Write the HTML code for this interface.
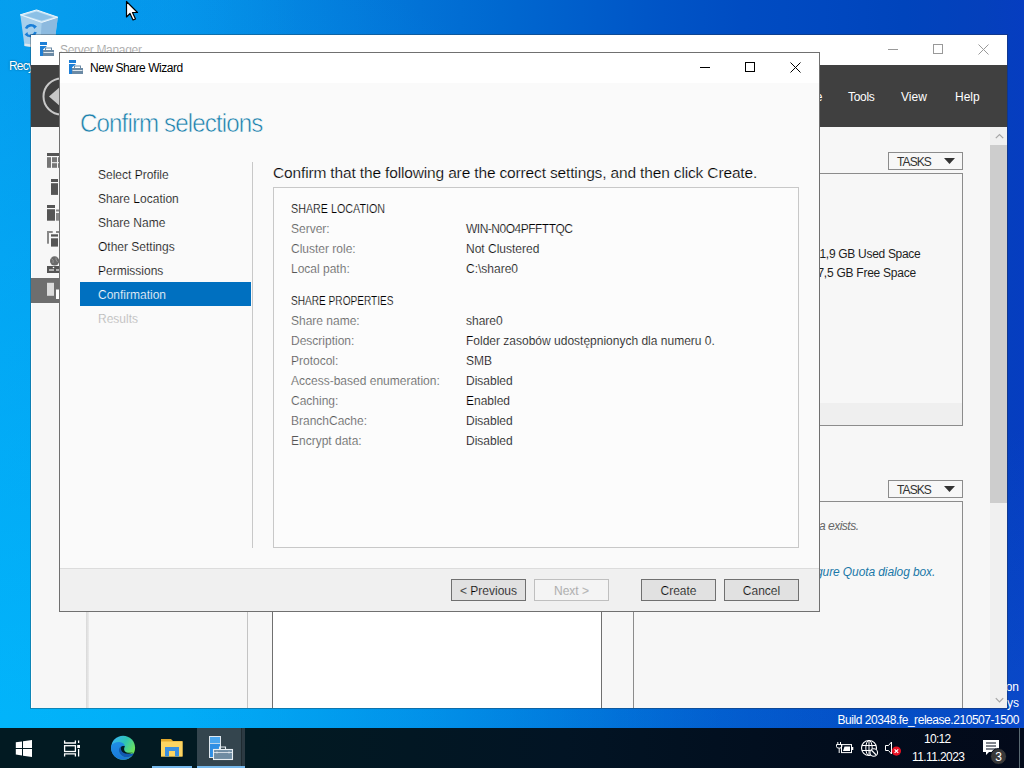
<!DOCTYPE html>
<html><head><meta charset="utf-8">
<style>
*{margin:0;padding:0;box-sizing:border-box}
html,body{width:1024px;height:768px;overflow:hidden}
body{position:relative;font-family:"Liberation Sans",sans-serif;font-size:12px;background:#0a78dc;color:#000}
.a{position:absolute}
.t{position:absolute;white-space:nowrap;line-height:1}
#desk{left:0;top:0;width:1024px;height:728px;background:linear-gradient(90deg,rgba(0,180,255,0.25) 0px,rgba(0,180,255,0) 300px),radial-gradient(ellipse 880px 820px at 0% 100%,rgba(0,190,255,0.75) 0%,rgba(0,175,250,0.52) 48%,rgba(0,150,240,0.2) 80%,rgba(0,140,240,0) 100%),radial-gradient(ellipse 700px 300px at 100% 100%,rgba(20,110,230,0.25) 0%,rgba(20,110,230,0) 100%),linear-gradient(90deg,#0898e8 0%,#0592e8 17.6%,#0488e2 25.5%,#037ddc 33.3%,#0272d6 41.1%,#0068d0 49%,#005ecb 56.8%,#0054c6 64.7%,#004cc2 72.6%,#0048c0 80.4%,#0044bc 88.3%,#0440bc 96%,#063dc0 100%)}
#taskbar{left:0;top:728px;width:1024px;height:40px;background:linear-gradient(90deg,#021a22 0%,#021a22 25%,#021424 55%,#020c1c 85%,#030a1a 100%)}
#sm{left:30px;top:34px;width:978px;height:675px;background:#f7f7f7;border:1px solid rgba(40,40,40,0.32);background-clip:padding-box;overflow:hidden}
#dlg{left:59px;top:52px;width:761px;height:560px;background:#fafafa;border:1px solid #707070;-webkit-text-stroke:0.2px #fafafa}
.lbl{color:#555}
.btn{position:absolute;height:22px;width:75px;background:#e1e1e1;border:1px solid #707070;text-align:center;line-height:21px;padding-top:1px;color:#000;-webkit-text-stroke:0.2px #e1e1e1}
</style></head><body>
<div id="desk" class="a"></div>
<!-- desktop items -->
<svg class="a" style="left:18px;top:8px" width="42" height="42" viewBox="0 0 42 42">
  <path d="M2.3 6.8L18.5 1.9L39.8 9.2L36 38L22 40L6.5 38Z" fill="#a6cfec"/>
  <path d="M23.7 14.4L39.8 9.2L36 38L22 40Z" fill="#8dbadf"/>
  <path d="M2.3 6.8L18.5 1.9L39.8 9.2L23.7 14.4Z" fill="#c4e2f6" stroke="#eaf5fc" stroke-width="1"/>
  <path d="M6 7.2L18.5 3.6L35.5 9.2L23.7 12.8Z" fill="#8cc0e6"/>
  <path d="M8 20.5a5.5 5.5 0 0 1 9 -1.5M17.5 24a5.5 5.5 0 0 1 -9.5 2" fill="none" stroke="#1a7fd8" stroke-width="2.6"/>
  <path d="M15.5 16.5L19 18.5L16 21Z M10 28.5L6.5 26.5L9.5 24Z" fill="#1a7fd8"/>
  <path d="M6.5 35.5L22 37.5V40L6.5 38Z" fill="#dce8ef"/>
</svg>
<div class="t" style="left:9px;top:60px;color:#fff;letter-spacing:-0.8px;text-shadow:0 0 2px rgba(0,0,0,.5)">Recycle Bin</div>

<div class="t" style="right:5px;top:681px;color:#fff">Windows Server 2022 Datacenter Evaluation</div>
<div class="t" style="right:5px;top:697px;color:#fff">Windows License valid for 180 days</div>
<div class="t" style="right:5px;top:714px;color:#fff;letter-spacing:-0.45px">Build 20348.fe_release.210507-1500</div>

<!-- Server Manager window -->
<div id="sm" class="a">
  <div class="a" style="left:0;top:0;width:976px;height:30px;background:#fff"></div>
  <svg class="a" style="left:9px;top:7px" width="16" height="16" viewBox="0 0 16 16">
    <rect x="0" y="0" width="7" height="3" fill="#1e7fd6"/>
    <rect x="0" y="4" width="3" height="10" fill="#1e7fd6"/>
    <path d="M3 4H7L3 7.5Z" fill="#1e7fd6"/>
    <rect x="5.5" y="6" width="6" height="2.5" fill="#fff" stroke="#6b8aa5" stroke-width="1"/>
    <rect x="3" y="8" width="11" height="6" fill="#6b8aa5"/>
    <rect x="3.5" y="10" width="10" height="1" fill="#e0e8ee"/>
  </svg>
  <div class="t" style="left:29px;top:9px;color:#9a9a9a;letter-spacing:-0.32px;-webkit-text-stroke:0.2px #fff">Server Manager</div>
  <div class="a" style="left:857px;top:14px;width:10px;height:1px;background:#999"></div>
  <div class="a" style="left:902px;top:9px;width:10px;height:10px;border:1px solid #999"></div>
  <svg class="a" style="left:947px;top:9px" width="11" height="11" viewBox="0 0 11 11"><path d="M0.5 0.5L10.5 10.5M10.5 0.5L0.5 10.5" stroke="#999" stroke-width="1"/></svg>
  <!-- dark header -->
  <div class="a" style="left:0;top:30px;width:976px;height:62px;background:#404040"></div>
  <svg class="a" style="left:11px;top:42px" width="40" height="40" viewBox="0 0 40 40">
    <circle cx="19.5" cy="19.5" r="18" fill="none" stroke="#c8c8c8" stroke-width="2"/>
    <path d="M7 19.5L19 9V30Z" fill="#c8c8c8"/>
    <rect x="18" y="16" width="12" height="7" fill="#c8c8c8"/>
  </svg>
  <div class="t" style="left:748px;top:56px;color:#fff">Manage</div>
  <div class="t" style="left:817px;top:56px;color:#fff;letter-spacing:-0.3px">Tools</div>
  <div class="t" style="left:870px;top:56px;color:#fff">View</div>
  <div class="t" style="left:924px;top:56px;color:#fff">Help</div>
  <!-- content -->
  <div class="a" style="left:0;top:92px;width:56px;height:582px;background:#f7f7f7"></div>
  <div class="a" style="left:0;top:92px;width:1px;height:582px;background:#fff"></div>
  <div class="a" style="left:55px;top:92px;width:3px;height:582px;background:linear-gradient(90deg,#d8d8d8,#ececec)"></div>
  <div class="a" style="left:0;top:243px;width:55px;height:25px;background:#6e6e6e"></div>
  <div class="a" style="left:216px;top:92px;width:1px;height:582px;background:#c4c4c4"></div>
  <div class="a" style="left:241px;top:92px;width:1px;height:582px;background:#707070"></div>
  <div class="a" style="left:242px;top:92px;width:328px;height:582px;background:#fff"></div>
  <div class="a" style="left:570px;top:92px;width:1px;height:582px;background:#707070"></div>
  <!-- nav icons -->
  <svg class="a" style="left:16px;top:118px" width="14" height="150" viewBox="0 0 14 150">
    <rect x="0" y="0" width="14" height="3" fill="#555"/>
    <rect x="0" y="4.2" width="4" height="10.6" fill="#767676"/>
    <rect x="5" y="4.2" width="5" height="5" fill="#767676"/>
    <rect x="5" y="10.2" width="5" height="4.6" fill="#767676"/>
    <rect x="11" y="4.2" width="3" height="5" fill="#767676"/>
    <rect x="11" y="10.2" width="3" height="4.6" fill="#767676"/>
    <rect x="4" y="26" width="7" height="3" fill="#555"/>
    <rect x="4" y="30.2" width="7" height="11.7" fill="#555"/>
    <rect x="0" y="52" width="8" height="3" fill="#555"/>
    <rect x="0" y="56.2" width="8" height="11.5" fill="#555"/>
    <rect x="9" y="56.5" width="5" height="2" fill="#888"/>
    <rect x="9" y="60" width="5" height="7.7" fill="#888"/>
    <rect x="0" y="78" width="5.7" height="2" fill="#888"/>
    <rect x="0" y="80" width="2" height="10.7" fill="#888"/>
    <rect x="9" y="78" width="5" height="2" fill="#888"/>
    <rect x="3.5" y="80.8" width="8" height="13.3" fill="#f7f7f7"/>
    <rect x="4" y="81.3" width="7" height="2.3" fill="#555"/>
    <rect x="4" y="85.3" width="7" height="8.3" fill="#555"/>
    <circle cx="7.6" cy="107.9" r="4.6" fill="#6a6a6a"/>
    <path d="M4.5 105.5Q7 107 6 110M9 104.5Q8.5 107 10.5 109" stroke="#9a9a9a" stroke-width="0.9" fill="none"/>
    <rect x="0" y="113" width="14" height="7" fill="#555"/>
    <rect x="2" y="116" width="5" height="2" fill="#b0b0b0"/>
    <rect x="9" y="116" width="5" height="2" fill="#b0b0b0"/>
    <circle cx="6.5" cy="114.5" r="0.8" fill="#fff"/>
    <rect x="0" y="129.8" width="7" height="13" fill="#dcdcdc"/>
    <rect x="9" y="136.5" width="5" height="9.5" fill="#fff"/>
  </svg>
  <!-- scrollbar -->
  <div class="a" style="left:959px;top:92px;width:17px;height:582px;background:#f0f0f0"></div>
  <div class="a" style="left:959px;top:110px;width:17px;height:358px;background:#cdcdcd"></div>
  <svg class="a" style="left:964px;top:98px" width="9" height="7" viewBox="0 0 9 7"><path d="M0.8 5.2L4.5 1.5L8.2 5.2" fill="none" stroke="#a6a6a6" stroke-width="1.2"/></svg>
  <svg class="a" style="left:964px;top:662px" width="9" height="7" viewBox="0 0 9 7"><path d="M0.8 1.2L4.5 4.9L8.2 1.2" fill="none" stroke="#a6a6a6" stroke-width="1.2"/></svg>
  <!-- panel 1 -->
  <div class="a" style="left:857px;top:117px;width:75px;height:18px;border:1px solid #8c8c8c;background:#f7f7f7"></div>
  <div class="t" style="left:866px;top:121px;color:#333;letter-spacing:-0.9px">TASKS</div>
  <svg class="a" style="left:913px;top:123px" width="11" height="7" viewBox="0 0 11 7"><path d="M0 0H11L5.5 6Z" fill="#333"/></svg>
  <div class="a" style="left:602px;top:138px;width:330px;height:253px;border:1px solid #8c8c8c;background:#f7f7f7"></div>
  <div class="a" style="left:603px;top:368px;width:328px;height:22px;background:#efefef"></div>
  <div class="t" style="left:783px;top:213px;color:#1e1e1e;letter-spacing:-0.3px">11,9 GB Used Space</div>
  <div class="t" style="left:780px;top:232px;color:#1e1e1e;letter-spacing:-0.25px">87,5 GB Free Space</div>
  <!-- panel 2 -->
  <div class="a" style="left:857px;top:445px;width:75px;height:18px;border:1px solid #8c8c8c;background:#f7f7f7"></div>
  <div class="t" style="left:866px;top:449px;color:#333;letter-spacing:-0.9px">TASKS</div>
  <svg class="a" style="left:913px;top:451px" width="11" height="7" viewBox="0 0 11 7"><path d="M0 0H11L5.5 6Z" fill="#333"/></svg>
  <div class="a" style="left:602px;top:466px;width:330px;height:220px;border:1px solid #8c8c8c;background:#f7f7f7"></div>
  <div class="t" style="left:788px;top:485px;color:#666;font-style:italic;letter-spacing:-0.5px">a exists.</div>
  <div class="t" style="left:785px;top:531px;color:#1a78a8;font-style:italic;letter-spacing:-0.1px">gure Quota dialog box.</div>
</div>

<!-- Dialog -->
<div id="dlg" class="a">
  <div class="a" style="left:0;top:0;width:759px;height:30px;background:#fff"></div>
  <svg class="a" style="left:9px;top:7px" width="16" height="16" viewBox="0 0 16 16">
    <rect x="0" y="0" width="7" height="3" fill="#1e7fd6"/>
    <rect x="0" y="4" width="3" height="10" fill="#1e7fd6"/>
    <path d="M3 4H7L3 7.5Z" fill="#1e7fd6"/>
    <rect x="5.5" y="6" width="6" height="2.5" fill="#fff" stroke="#6b8aa5" stroke-width="1"/>
    <rect x="3" y="8" width="11" height="6" fill="#6b8aa5"/>
    <rect x="3.5" y="10" width="10" height="1" fill="#e0e8ee"/>
  </svg>
  <div class="t" style="left:30px;top:9px;color:#000;letter-spacing:-0.45px;-webkit-text-stroke:0">New Share Wizard</div>
  <div class="a" style="left:640px;top:14px;width:10px;height:1px;background:#000"></div>
  <div class="a" style="left:685px;top:9px;width:10px;height:10px;border:1px solid #000"></div>
  <svg class="a" style="left:730px;top:9px" width="11" height="11" viewBox="0 0 11 11"><path d="M0.5 0.5L10.5 10.5M10.5 0.5L0.5 10.5" stroke="#000" stroke-width="1"/></svg>
  <div class="t" style="left:20px;top:58px;font-size:25.5px;color:#1a80ac;letter-spacing:-0.95px;transform:scaleX(0.947);transform-origin:0 0;-webkit-text-stroke:0.55px #fafafa">Confirm selections</div>
  <!-- nav -->
  <div class="t" style="left:38px;top:116px">Select Profile</div>
  <div class="t" style="left:38px;top:140px">Share Location</div>
  <div class="t" style="left:38px;top:164px">Share Name</div>
  <div class="t" style="left:38px;top:188px">Other Settings</div>
  <div class="t" style="left:38px;top:212px">Permissions</div>
  <div class="a" style="left:20px;top:229px;width:171px;height:24px;background:#0070c0"></div>
  <div class="t" style="left:38px;top:236px;color:#fff;-webkit-text-stroke:0.2px #0070c0">Confirmation</div>
  <div class="t" style="left:38px;top:260px;color:#b4b4b4">Results</div>
  <div class="a" style="left:192px;top:109px;width:1px;height:386px;background:#c8c8c8"></div>
  <div class="t" style="left:213px;top:112px;font-size:15.5px;letter-spacing:-0.15px">Confirm that the following are the correct settings, and then click Create.</div>
  <div class="a" style="left:213px;top:134px;width:526px;height:361px;border:1px solid #c8c8c8;background:#fcfcfc"></div>
  <div class="t" style="left:231px;top:150px;transform:scaleX(0.895);transform-origin:0 0">SHARE LOCATION</div>
  <div class="t lbl" style="left:231px;top:170px">Server:</div>
  <div class="t lbl" style="left:231px;top:190px">Cluster role:</div>
  <div class="t lbl" style="left:231px;top:210px">Local path:</div>
  <div class="t" style="left:406px;top:170px;letter-spacing:-0.5px">WIN-N0O4PFFTTQC</div>
  <div class="t" style="left:406px;top:190px">Not Clustered</div>
  <div class="t" style="left:406px;top:210px">C:\share0</div>
  <div class="t" style="left:231px;top:242px;transform:scaleX(0.842);transform-origin:0 0">SHARE PROPERTIES</div>
  <div class="t lbl" style="left:231px;top:262px">Share name:</div>
  <div class="t lbl" style="left:231px;top:282px">Description:</div>
  <div class="t lbl" style="left:231px;top:302px">Protocol:</div>
  <div class="t lbl" style="left:231px;top:322px">Access-based enumeration:</div>
  <div class="t lbl" style="left:231px;top:342px">Caching:</div>
  <div class="t lbl" style="left:231px;top:362px">BranchCache:</div>
  <div class="t lbl" style="left:231px;top:382px">Encrypt data:</div>
  <div class="t" style="left:406px;top:262px">share0</div>
  <div class="t" style="left:406px;top:282px">Folder zasobów udostępnionych dla numeru 0.</div>
  <div class="t" style="left:406px;top:302px">SMB</div>
  <div class="t" style="left:406px;top:322px">Disabled</div>
  <div class="t" style="left:406px;top:342px">Enabled</div>
  <div class="t" style="left:406px;top:362px">Disabled</div>
  <div class="t" style="left:406px;top:382px">Disabled</div>
  <!-- footer -->
  <div class="a" style="left:0;top:515px;width:759px;height:43px;background:#f0f0f0;border-top:1px solid #dcdcdc"></div>
  <div class="btn" style="left:391px;top:526px">&lt; Previous</div>
  <div class="btn" style="left:474px;top:526px;background:#f4f4f4;border-color:#bfbfbf;color:#a0a0a0">Next &gt;</div>
  <div class="btn" style="left:581px;top:526px">Create</div>
  <div class="btn" style="left:664px;top:526px">Cancel</div>
</div>

<!-- taskbar -->
<div id="taskbar" class="a">
  <svg class="a" style="left:15px;top:12px" width="18" height="18" viewBox="0 0 18 18">
    <path d="M0.8 2.2L7 1.4V7.9H0.8Z M8 1.2L17 0V7.9H8Z M0.8 8.9H7V15.4L0.8 14.6Z M8 8.9H17V17L8 15.8Z" fill="#fff"/>
  </svg>
  <svg class="a" style="left:63px;top:12px" width="18" height="18" viewBox="0 0 18 18">
    <path d="M1.6 0.5V3H12.4V0.5M1.6 16.5V13.8H12.4V16.5M15.6 0.5V3M15.6 9V16.5" fill="none" stroke="#fff" stroke-width="1.3"/>
    <rect x="1.6" y="5.7" width="10.8" height="5.8" fill="none" stroke="#fff" stroke-width="1.3"/>
    <rect x="14.2" y="5" width="2.8" height="3" fill="#fff"/>
  </svg>
  <svg class="a" style="left:110px;top:7px" width="26" height="26" viewBox="0 0 26 26">
    <defs>
      <linearGradient id="eg1" x1="0.1" y1="0.1" x2="0.95" y2="0.6"><stop offset="0" stop-color="#36b4f2"/><stop offset="0.5" stop-color="#2ec4b4"/><stop offset="1" stop-color="#6ee25a"/></linearGradient>
      <linearGradient id="eg2" x1="0" y1="0" x2="0.2" y2="1"><stop offset="0" stop-color="#1f8fe6"/><stop offset="1" stop-color="#1a78d8"/></linearGradient>
    </defs>
    <circle cx="13.1" cy="12.8" r="12" fill="url(#eg1)"/>
    <path d="M1.2 11C2.5 8 6 6.8 9.5 7C12.5 7.2 14.5 8.8 14.8 11C12 10 9.5 11.5 9 14C8.5 17 10 20 13 21.5C16 23 19.5 22.5 22.5 20.5C20 23.5 16.5 25 13 24.8C6.5 24.8 1.1 19.5 1.1 13Z" fill="url(#eg2)"/>
    <path d="M9 14C9.5 11.5 12 10 14.8 11C14 12.5 13.5 14.5 14.5 16.5C16 19 20 19.5 23.5 18L22.8 20.3C19.5 22.5 16 23 13 21.5C10 20 8.5 17 9 14Z" fill="#1158b2"/>
    <path d="M11 12.5C11.8 11 13.5 10.8 14.8 11.2C14 12.8 13.8 14.8 14.8 16.3C16.5 18 19.5 18.2 23.2 17.3C19.5 19.2 16 19.3 13.5 17.8C11.5 16.5 10.5 14.2 11 12.5Z" fill="#021a22"/>
  </svg>
  <svg class="a" style="left:160px;top:10px" width="23" height="19" viewBox="0 0 23 19">
    <path d="M1 1H11L13 3H22.5V18.5H1Z" fill="#e3a92c"/>
    <path d="M1 3.5H22.5V18.5H1Z" fill="#fcd462"/>
    <path d="M5 9H19V18.5H15V13H9V18.5H5Z" fill="#3a8fe0"/>
  </svg>
  <div class="a" style="left:152px;top:38px;width:40px;height:2px;background:#76b9ed"></div>
  <div class="a" style="left:197px;top:0px;width:44px;height:40px;background:#34454e"></div>
  <div class="a" style="left:241px;top:0px;width:1px;height:40px;background:#1e2a30"></div>
  <div class="a" style="left:242px;top:0px;width:3px;height:40px;background:#2c3a42"></div>
  <div class="a" style="left:197px;top:38px;width:48px;height:2px;background:#76b9ed"></div>
  <svg class="a" style="left:208px;top:7px" width="27" height="26" viewBox="0 0 27 26">
    <rect x="1.5" y="1.5" width="11" height="21" fill="#2f8fe4" stroke="#dfe8ef" stroke-width="1"/>
    <path d="M2 8.5H12" stroke="#dfe8ef" stroke-width="0.8"/>
    <rect x="2" y="2" width="10" height="6" fill="#4aa6ee"/>
    <rect x="5.5" y="14.5" width="19" height="10" fill="#6f8ca2" stroke="#e8eef2" stroke-width="1.1"/>
    <path d="M11.5 14.5V12H17.5V14.5" fill="none" stroke="#e8eef2" stroke-width="1.1"/>
    <path d="M6 17.5H24" stroke="#e8eef2" stroke-width="0.8"/>
    <path d="M9 16.5V18.5M21 16.5V18.5" stroke="#e8eef2" stroke-width="0.8"/>
  </svg>
  <!-- tray -->
  <svg class="a" style="left:830px;top:4px" width="80" height="32" viewBox="0 0 80 32">
    <path d="M7.8 10V12.5M10.5 10V12.5" stroke="#fff" stroke-width="1"/>
    <path d="M6.5 12.5H11.8V14.5Q11.8 16.2 9.2 16.2Q6.5 16.2 6.5 14.5Z" fill="none" stroke="#fff" stroke-width="1"/>
    <path d="M9.2 16.2V21" stroke="#fff" stroke-width="1"/>
    <rect x="11.5" y="12.6" width="10" height="8" fill="none" stroke="#fff" stroke-width="1"/>
    <rect x="22" y="15" width="1.3" height="3" fill="#fff"/>
    <path d="M14.5 14.5H20V19H13Z" fill="#fff"/>
    <circle cx="39" cy="16" r="7.5" fill="none" stroke="#fff" stroke-width="1.1"/>
    <ellipse cx="39" cy="16" rx="3.2" ry="7.5" fill="none" stroke="#fff" stroke-width="1"/>
    <path d="M32 13.5H46M32 18.5H46M39 8.5V23.5" stroke="#fff" stroke-width="1"/>
    <circle cx="43.75" cy="20.5" r="3.8" fill="#020e1e" stroke="#fff" stroke-width="1.1"/>
    <path d="M41.3 18L46.2 23" stroke="#fff" stroke-width="1.1"/>
    <path d="M55.5 13.5H58.5L61.5 10V22L58.5 18.5H55.5Z" fill="none" stroke="#fff" stroke-width="1"/>
    <circle cx="66.4" cy="19.1" r="4.6" fill="#e81123"/>
    <path d="M64.6 17.3L68.2 20.9M68.2 17.3L64.6 20.9" stroke="#fff" stroke-width="1.2"/>
  </svg>
  <div class="t" style="left:924px;top:5px;color:#fff;letter-spacing:-0.7px">10:12</div>
  <div class="t" style="left:912px;top:23px;color:#fff;letter-spacing:-0.6px">11.11.2023</div>
  <svg class="a" style="left:982px;top:11px" width="26" height="26" viewBox="0 0 26 26">
    <path d="M1 1H17V13H7L4 16V13H1Z" fill="#fff"/>
    <path d="M4 4H14M4 7H14M4 10H14" stroke="#030b1b" stroke-width="1"/>
    <circle cx="16.5" cy="17.5" r="8" fill="#3a3a3a" stroke="#030b1b" stroke-width="1"/>
    <text x="16.5" y="22" font-family="Liberation Sans" font-size="12" fill="#fff" text-anchor="middle">3</text>
  </svg>
  <div class="a" style="left:1019px;top:0;width:1px;height:40px;background:#5a6a72"></div>
</div>

<!-- cursor -->
<svg class="a" style="left:125px;top:0px" width="14" height="22" viewBox="0 0 14 22">
  <path d="M1.5 1.5V17L5 13.5L8 20L10.5 19L7.5 12.5H12.5Z" fill="#fff" stroke="#000" stroke-width="1.2" stroke-linejoin="round"/>
</svg>
</body></html>
